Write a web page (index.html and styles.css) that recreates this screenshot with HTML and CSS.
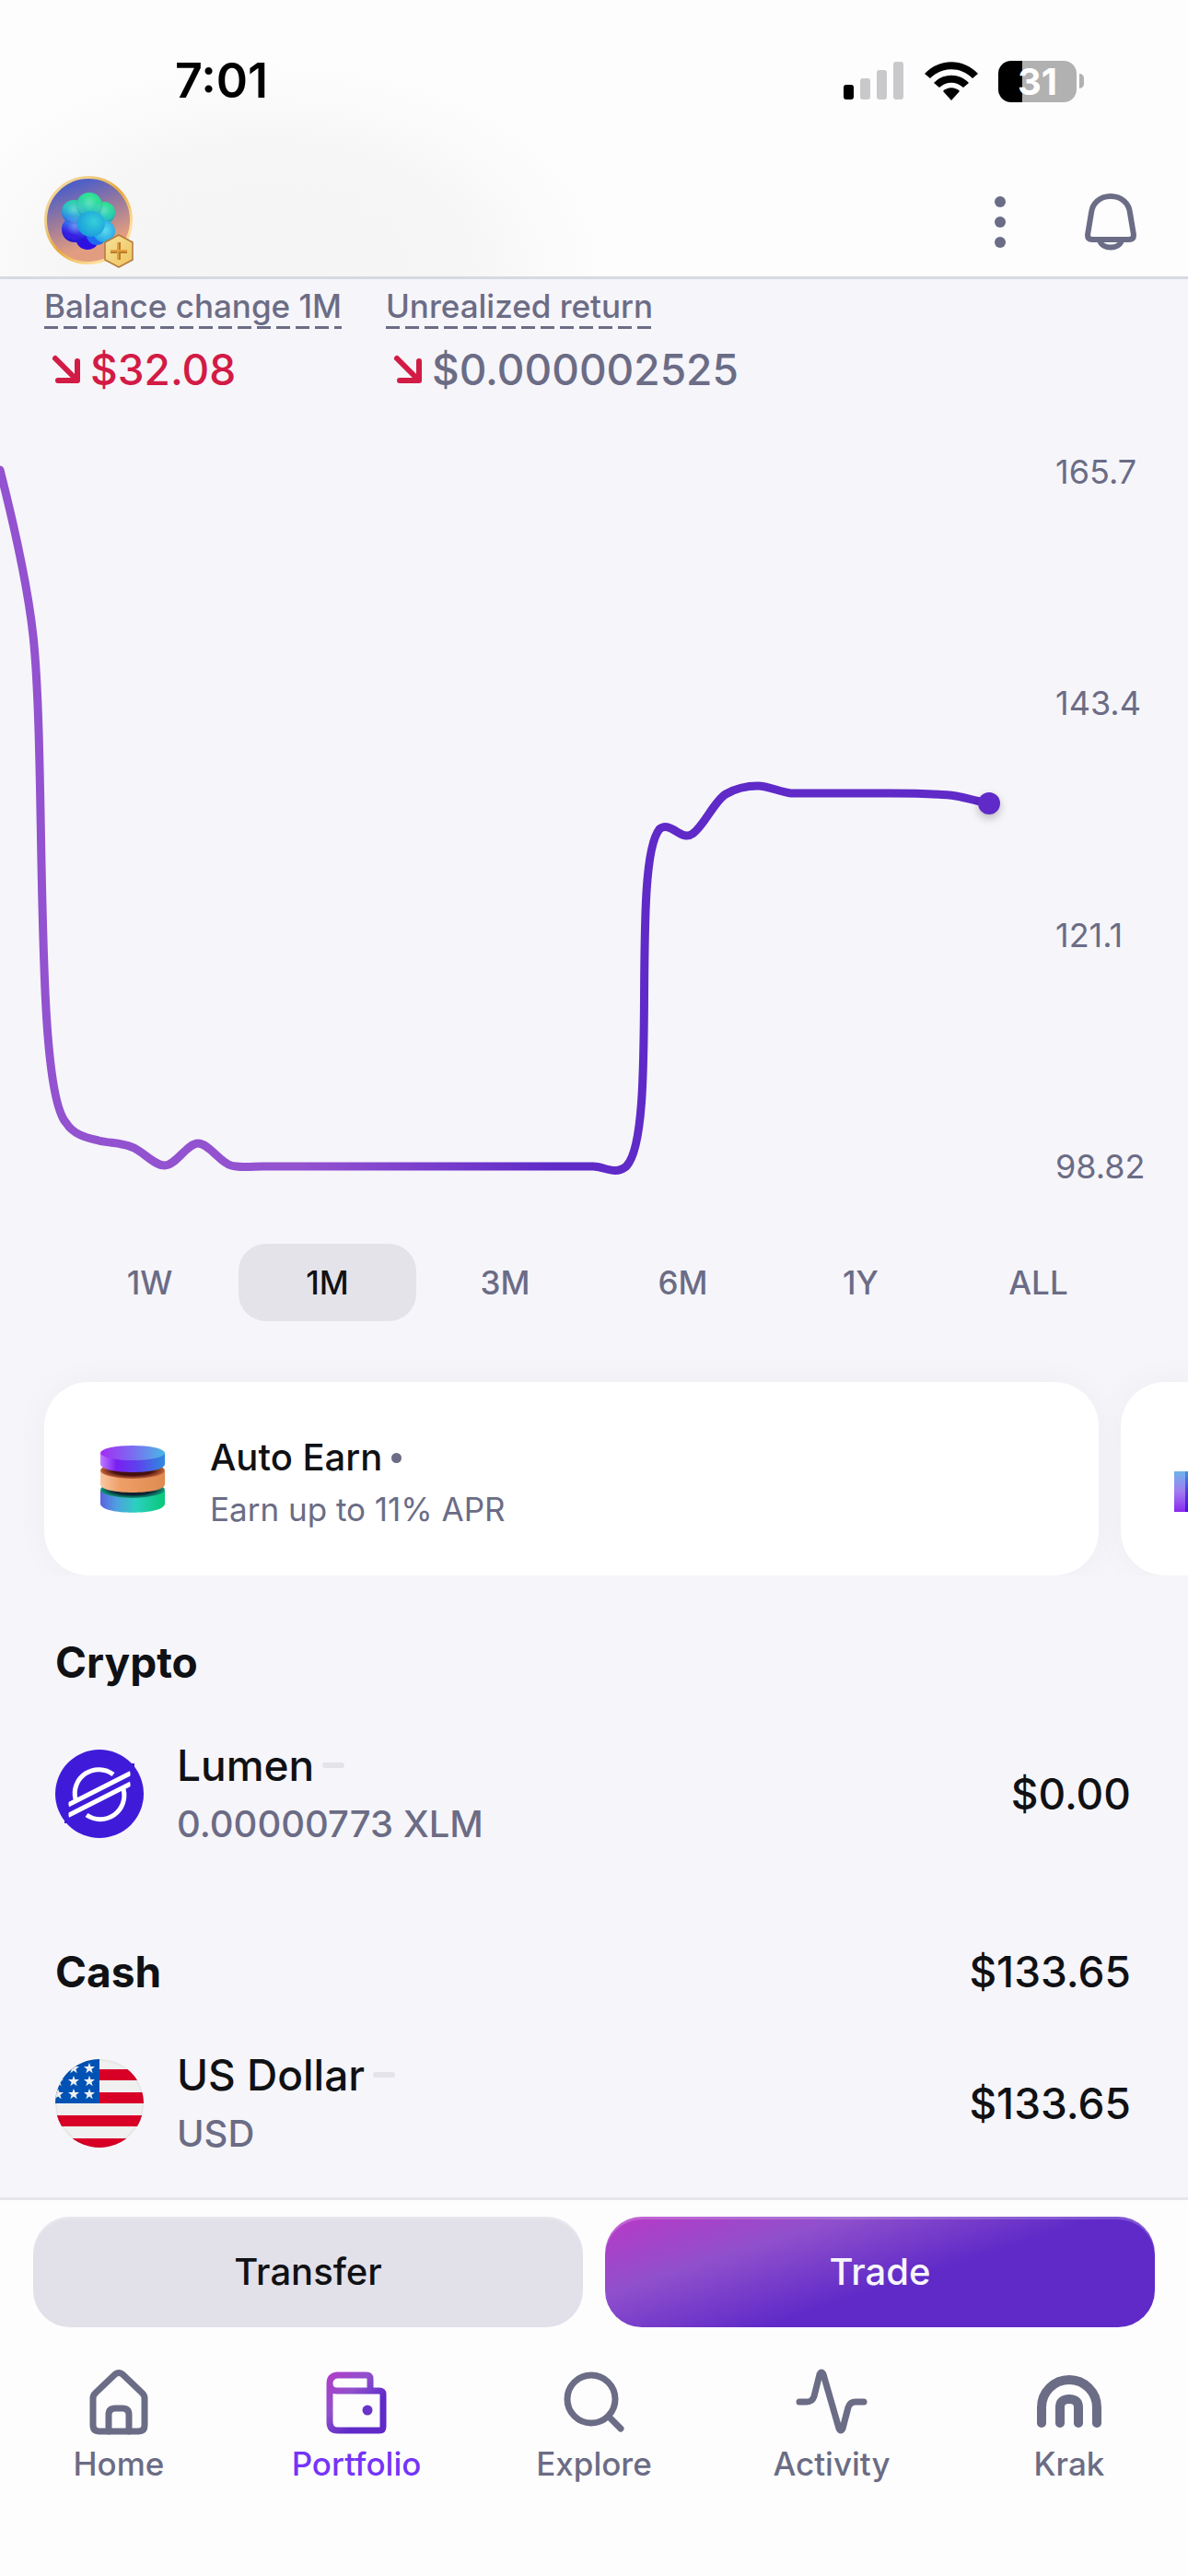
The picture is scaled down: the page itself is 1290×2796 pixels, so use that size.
FILE: index.html
```html
<!DOCTYPE html>
<html lang="en">
<head>
<meta charset="utf-8">
<meta name="viewport" content="width=device-width, initial-scale=1">
<title>Portfolio</title>
<link rel="stylesheet" href="styles.css">
</head>
<body>
<div class="app">
  <header class="top">
    <div class="status">
      <time class="clock">7:01</time>
      <div class="status-icons">
        <svg class="signal" viewBox="0 0 66 42" aria-hidden="true">
          <rect x="0" y="25" width="11" height="16" rx="3" fill="#000"/>
          <rect x="18" y="18" width="11" height="23" rx="3" fill="#c9c9cb"/>
          <rect x="36" y="9" width="11" height="32" rx="3" fill="#c9c9cb"/>
          <rect x="54" y="0" width="11" height="41" rx="3" fill="#c9c9cb"/>
        </svg>
        <svg class="wifi" viewBox="0 0 58 42" aria-hidden="true">
          <path d="M0 13C16-4 42-4 58 13L52 18C39 5 19 5 6 18Z"/>
          <path d="M10 23C20 12 38 12 48 23L42 28C34 21 24 21 16 28Z"/>
          <path d="M20 32C25 27 33 27 38 32L29 42Z"/>
        </svg>
        <div class="battery"><span class="battery-body">31</span><span class="battery-tip"></span></div>
      </div>
    </div>
    <div class="toolbar">
      <button class="icon-button" aria-label="Profile">
        <svg class="avatar" viewBox="0 0 100 100" aria-hidden="true">
          <defs>
            <linearGradient id="sky" x1=".25" y1="0" x2=".6" y2="1"><stop offset=".1" stop-color="#4f5fc6"/><stop offset=".45" stop-color="#9d7b9b"/><stop offset=".8" stop-color="#e29d80"/></linearGradient>
            <linearGradient id="ring" x1="0" y1="0" x2="1" y2="1"><stop offset="0" stop-color="#f7dda0"/><stop offset=".25" stop-color="#f0cf88"/><stop offset=".5" stop-color="#e6a93a"/><stop offset=".8" stop-color="#ffe2a0"/><stop offset="1" stop-color="#eeb040"/></linearGradient>
            <linearGradient id="blob" gradientUnits="userSpaceOnUse" x1="58" y1="20" x2="38" y2="76"><stop offset=".1" stop-color="#1fdf8e"/><stop offset=".42" stop-color="#1fbfc4"/><stop offset=".62" stop-color="#2a7cf0"/><stop offset=".85" stop-color="#2c10e2"/></linearGradient>
            <radialGradient id="shine" cx=".5" cy=".4" r=".55"><stop offset="0" stop-color="#fff" stop-opacity=".3"/><stop offset=".6" stop-color="#fff" stop-opacity=".05"/><stop offset="1" stop-color="#003a90" stop-opacity=".18"/></radialGradient>
            <radialGradient id="cyan" cx=".55" cy=".45" r=".6"><stop offset="0" stop-color="#5cdcec"/><stop offset="1" stop-color="#1f9fe6"/></radialGradient>
            <radialGradient id="teal" cx=".6" cy=".4" r=".6"><stop offset="0" stop-color="#35cfd8"/><stop offset="1" stop-color="#1b9fdc"/></radialGradient>
            <linearGradient id="gold" x1="0" y1="0" x2="1" y2="1"><stop offset="0" stop-color="#f7e19a"/><stop offset="1" stop-color="#efc45e"/></linearGradient>
          </defs>
          <circle cx="48" cy="48" r="46.500" fill="url(#sky)" stroke="url(#ring)" stroke-width="3"/>
          <g fill="url(#blob)">
            <circle cx="47" cy="67" r="13"/><circle cx="32" cy="39" r="13"/><circle cx="65" cy="40" r="12"/><circle cx="48" cy="50" r="22"/><circle cx="33" cy="58" r="14"/><circle cx="49" cy="32" r="14"/>
          </g>
          <g fill="url(#shine)"><circle cx="32" cy="39" r="13"/><circle cx="65" cy="40" r="12"/><circle cx="33" cy="58" r="14"/><circle cx="49" cy="32" r="14"/></g>
          <circle cx="57" cy="64" r="11" fill="#1f6cf0"/>
          <circle cx="65" cy="60" r="12" fill="url(#cyan)"/>
          <ellipse cx="51" cy="52" rx="15" ry="14" fill="url(#teal)"/>
          <path d="M81 64L96 72V91L81 99L66 91V72Z" fill="url(#gold)" stroke="#b57a3c" stroke-width="1.500" stroke-linejoin="round"/>
          <path d="M81 72V91M72 82H90" stroke="#b97c2c" stroke-width="4"/>
          <path d="M80 72V91M72 81H90" stroke="#e3a23f" stroke-width="2"/>
        </svg>
      </button>
      <div class="toolbar-actions">
        <button class="icon-button" aria-label="More">
          <svg class="action-icon" viewBox="0 0 72 72" fill="currentColor" aria-hidden="true"><circle cx="36" cy="14" r="6"/><circle cx="36" cy="36" r="6"/><circle cx="36" cy="58" r="6"/></svg>
        </button>
        <button class="icon-button" aria-label="Notifications">
          <svg class="action-icon" viewBox="0 0 72 72" fill="none" stroke="currentColor" stroke-width="6" stroke-linejoin="round" aria-hidden="true"><path d="M36 8C24 8 16 16 15 26L11 50Q11 55 16 55H56Q61 55 61 50L57 26C56 16 48 8 36 8Z"/><path d="M24 56C27 66 45 66 48 56"/></svg>
        </button>
      </div>
    </div>
  </header>

  <main>
    <dl class="stats">
      <div class="stat">
        <dt>Balance change 1M</dt>
        <dd class="down"><svg class="arrow" viewBox="0 0 50 50" aria-hidden="true"><path d="M12 13L35 36M15 37H36V16"/></svg>$32.08</dd>
      </div>
      <div class="stat">
        <dt>Unrealized return</dt>
        <dd><svg class="arrow" viewBox="0 0 50 50" aria-hidden="true"><path d="M12 13L35 36M15 37H36V16"/></svg>$0.000002525</dd>
      </div>
    </dl>

    <section class="chart" aria-label="Balance over one month">
      <svg class="plot" viewBox="0 488 1146 802" role="img" aria-label="Balance line">
        <defs>
          <linearGradient id="line" gradientUnits="userSpaceOnUse" x1="330" y1="0" x2="600" y2="0"><stop offset="0" stop-color="#9352cf"/><stop offset="1" stop-color="#5f2ac8"/></linearGradient>
        </defs>
        <path d="M0 510C14 565 30 635 36 690C51 830 36 1180 72 1219C80 1232 95 1235 107 1238C119 1241 131 1240 143 1245C155 1249 167 1265 179 1265C191 1265 203 1241 215 1241C227 1241 239 1262 251 1265C262 1268 275 1266 286 1266H644C656 1266 668 1276 680 1266C716 1230 684 940 716 900C728 890 740 914 752 905C764 897 776 869 788 862C800 855 812 853 823 853C835 853 847 860 859 861H967C990 861 1015 861 1038 864C1050 866 1062 870 1074 872" fill="none" stroke="url(#line)" stroke-width="9" stroke-linecap="round"/>
        <circle class="plot-point" cx="1074" cy="872" r="12"/>
      </svg>
      <ol class="axis"><li>165.7</li><li>143.4</li><li>121.1</li><li>98.82</li></ol>
    </section>

    <div class="ranges">
      <button class="range">1W</button>
      <button class="range selected" aria-pressed="true">1M</button>
      <button class="range">3M</button>
      <button class="range">6M</button>
      <button class="range">1Y</button>
      <button class="range">ALL</button>
    </div>

    <div class="promos">
      <a class="promo" href="#earn">
        <svg class="promo-icon" viewBox="0 0 72 76" aria-hidden="true">
          <defs>
            <linearGradient id="top1"><stop offset="0" stop-color="#a52cf4"/><stop offset=".5" stop-color="#7a6cf0"/><stop offset="1" stop-color="#4ab8e4"/></linearGradient>
            <linearGradient id="side1"><stop offset="0" stop-color="#c07cff"/><stop offset=".25" stop-color="#7a1ff2"/><stop offset=".6" stop-color="#5a45ec"/><stop offset="1" stop-color="#2f8be0"/></linearGradient>
            <linearGradient id="side2"><stop offset="0" stop-color="#fbc8a4"/><stop offset=".3" stop-color="#ee9f68"/><stop offset="1" stop-color="#e08a50"/></linearGradient>
            <linearGradient id="side3"><stop offset="0" stop-color="#5b62e0"/><stop offset=".25" stop-color="#4f9fe0"/><stop offset=".55" stop-color="#2cd0c0"/><stop offset="1" stop-color="#08c878"/></linearGradient>
            <radialGradient id="shade2"><stop offset=".6" stop-color="#45100e"/><stop offset="1" stop-color="#c8663a"/></radialGradient>
            <radialGradient id="shade3"><stop offset=".6" stop-color="#0a2030"/><stop offset="1" stop-color="#0f9c7c"/></radialGradient>
          </defs>
          <path d="M1 51V65C1 78 71 78 71 65V51Z" fill="url(#side3)"/><ellipse cx="36" cy="50" rx="35" ry="9" fill="url(#shade3)"/>
          <path d="M1 30V44C1 56 71 56 71 44V30Z" fill="url(#side2)"/><ellipse cx="36" cy="29" rx="35" ry="9" fill="url(#shade2)"/>
          <path d="M1 10V22C1 34 71 34 71 22V10Z" fill="url(#side1)"/><ellipse cx="36" cy="10" rx="35" ry="8" fill="url(#top1)"/>
        </svg>
        <span class="promo-text"><span class="promo-title">Auto Earn<i class="bullet"></i></span><span class="promo-sub">Earn up to 11% APR</span></span>
      </a>
      <a class="promo" href="#next" aria-label="Next offer">
        <svg class="promo-icon" viewBox="0 0 72 76" aria-hidden="true">
          <defs>
            <linearGradient id="block" x1="0" y1="0" x2="0" y2="1"><stop offset="0" stop-color="#6cb4ea"/><stop offset=".5" stop-color="#a27cf0"/><stop offset="1" stop-color="#8a28f0"/></linearGradient>
            <linearGradient id="block-side" x1="0" y1="0" x2="0" y2="1"><stop offset="0" stop-color="#4a8fe0"/><stop offset=".5" stop-color="#4a3ce8"/><stop offset="1" stop-color="#4a0ce0"/></linearGradient>
          </defs>
          <path d="M-2 30H10V74H-2Z" fill="url(#block)"/><path d="M10 30H70V74H10Z" fill="url(#block-side)"/>
        </svg>
      </a>
    </div>

    <section class="holdings">
      <div class="group-head"><h2>Crypto</h2></div>
      <a class="asset" href="#xlm">
        <svg class="coin" viewBox="0 0 96 96" aria-hidden="true">
          <circle cx="48" cy="48" r="48" fill="#3f1bd9"/>
          <g fill="none" stroke="#fff" stroke-width="5">
            <path d="M63 27A26 26 0 0 0 22 54"/><path d="M34 71A26 26 0 0 0 74 43"/>
            <path d="M14 60L82 25.500M14 71.500L82 37"/>
          </g>
          <path d="M10 50H14.500V80H10ZM81.500 15H86V45H81.500Z" fill="#3f1bd9"/>
        </svg>
        <span class="asset-name"><span class="asset-title">Lumen<i class="flat"></i></span><span class="asset-sub">0.00000773 XLM</span></span>
        <span class="amount">$0.00</span>
      </a>
      <div class="group-head"><h2>Cash</h2><span class="amount">$133.65</span></div>
      <a class="asset" href="#usd">
        <svg class="coin" viewBox="0 0 96 96" aria-hidden="true">
          <defs>
            <clipPath id="round"><circle cx="48" cy="48" r="48"/></clipPath>
            <path id="star" d="M0-6L1.500-2H6L2.400.900L3.700 5.200L0 2.600L-3.700 5.200L-2.400.900L-6-2H-1.500Z" fill="#f0f0f0"/>
          </defs>
          <g clip-path="url(#round)">
            <path d="M0 0H96V96H0Z" fill="#f0f0f0"/>
            <path d="M48 11H96V23H48ZM48 36H96V48H48ZM0 61H96V73H0ZM0 86H96V96H0Z" fill="#d80027"/>
            <path d="M0 0H48V48H0Z" fill="#0052b4"/>
            <use href="#star" x="20" y="10"/><use href="#star" x="37" y="10"/>
            <use href="#star" x="3" y="24"/><use href="#star" x="20" y="24"/><use href="#star" x="37" y="24"/>
            <use href="#star" x="3" y="38"/><use href="#star" x="20" y="38"/><use href="#star" x="37" y="38"/>
          </g>
          <circle cx="48" cy="48" r="47" fill="none" stroke="#000" stroke-opacity=".04" stroke-width="2"/>
        </svg>
        <span class="asset-name"><span class="asset-title">US Dollar<i class="flat"></i></span><span class="asset-sub">USD</span></span>
        <span class="amount">$133.65</span>
      </a>
    </section>
  </main>

  <footer class="dock">
    <div class="cta-row">
      <button class="cta transfer">Transfer</button>
      <button class="cta trade">Trade</button>
    </div>
    <nav class="tabs">
      <a class="tab" href="#home">
        <svg class="tab-icon" viewBox="0 0 80 80" aria-hidden="true"><path d="M12 36Q12 33 15 30L36 10Q40 7 44 10L65 30Q68 33 68 36V65Q68 72 61 72H19Q12 72 12 65Z"/><path d="M29 72V54Q29 47 36 47H44Q51 47 51 54V72"/></svg>
        Home</a>
      <a class="tab current" href="#portfolio" aria-current="page">
        <svg class="tab-icon" viewBox="0 0 80 80" aria-hidden="true">
          <defs><linearGradient id="wallet" gradientUnits="userSpaceOnUse" x1="10" y1="8" x2="66" y2="66"><stop offset="0" stop-color="#b13dc8"/><stop offset=".4" stop-color="#9050cc"/><stop offset=".75" stop-color="#5f2ac8"/></linearGradient></defs>
          <g class="wallet"><path d="M11 22V62Q11 71 20 71H65Q69 71 69 67V32Q69 28 65 28H19Q11 28 11 20T19 11H51Q55 11 55 15V28"/></g><circle cx="52" cy="49" r="5.500" fill="#6a35c9"/></svg>
        Portfolio</a>
      <a class="tab" href="#explore">
        <svg class="tab-icon" viewBox="0 0 80 80" aria-hidden="true"><circle cx="37" cy="37" r="26"/><path d="M56 56L69 69"/></svg>
        Explore</a>
      <a class="tab" href="#activity">
        <svg class="tab-icon" viewBox="0 0 80 80" aria-hidden="true"><path d="M5 40H13Q19 40 21 34L27 10Q29 6 31 10L48 69Q50 73 52 69L58 46Q60 40 66 40H75"/></svg>
        Activity</a>
      <a class="tab" href="#krak">
        <svg class="tab-icon krak" viewBox="0 0 80 80" aria-hidden="true"><path d="M10 63V46A30 30 0 0 1 70 46V63"/><path d="M30 63V46Q30 37 40 37T50 46V63"/></svg>
        Krak</a>
    </nav>
  </footer>
</div>
</body>
</html>
```
FILE: styles.css
```css
* { box-sizing: border-box; }
html, body { height: 100%; }
body {
  margin: 0;
  background: #f6f5fa;
  color: #101114;
  font-family: Inter, "Liberation Sans", sans-serif;
  font-size: 35px;
  line-height: 48px;
  font-weight: 500;
}
button { border: 0; padding: 0; background: none; color: inherit; font: inherit; cursor: pointer; }
a { color: inherit; text-decoration: none; }
svg { display: block; flex: none; }
h2, dl, dd, ol { margin: 0; padding: 0; }

.app { display: flex; flex-direction: column; min-height: 100%; overflow: hidden; }
main { flex: 1; }

/* Header */
.top {
  background: radial-gradient(ellipse 360px 220px at 290px 290px, #f5f5f6 0, #f6f6f7 60%, #fdfdfe 100%) #fdfdfe;
  border-bottom: 3px solid #d7d9e2;
}
.status { display: flex; justify-content: space-between; align-items: center; height: 174px; padding: 2px 113px 0 190px; }
.clock { font-size: 52px; font-weight: 600; color: #000; }
.status-icons { display: flex; align-items: center; gap: 22px; }
.signal { width: 66px; height: 42px; }
.wifi { width: 58px; height: 42px; }
.battery { display: flex; align-items: center; gap: 3px; }
.battery-body {
  width: 85px; height: 45px; border-radius: 14px;
  background: linear-gradient(90deg, #000 26px, #b1b1b1 26px);
  color: #fff; font-size: 40px; line-height: 45px; font-weight: 700; text-align: center;
}
.battery-tip { width: 5px; height: 16px; border-radius: 0 6px 6px 0; background: #b1b1b1; }
.toolbar { display: flex; justify-content: space-between; align-items: center; height: 126px; padding: 8px 48px 0; }
.toolbar-actions { display: flex; align-items: center; gap: 48px; color: #6b6c85; }
.avatar { width: 100px; height: 100px; }
.action-icon { width: 72px; height: 72px; }

/* Figures above the chart */
.stats { display: flex; gap: 48px; padding: 4px 48px 0; color: #6b6c85; }
.stat { display: flex; flex-direction: column; align-items: flex-start; gap: 14px; }
.stat dt {
  height: 50px; line-height: 50px;
  background: repeating-linear-gradient(90deg, #6b6c85 0 15px, transparent 15px 21px) left bottom / 100% 3px no-repeat;
}
.stat dd { display: flex; align-items: center; font-size: 46px; line-height: 60px; }
.stat .down { color: #d21b45; }
.arrow { width: 50px; height: 50px; fill: none; stroke: #d21b45; stroke-width: 6; stroke-linecap: round; stroke-linejoin: round; }

/* Chart */
.chart { display: flex; margin-top: 57px; }
.plot { flex: 1; min-width: 0; }
.plot-point { fill: #5f2ac8; filter: drop-shadow(0 4px 5px rgba(0, 0, 0, .25)); }
.axis {
  display: flex; flex-direction: column; justify-content: space-between;
  width: 144px; list-style: none; color: #6b6c85; font-size: 36px; font-weight: 400;
}
.ranges { display: grid; grid-template-columns: repeat(6, 1fr); padding: 0 66px; margin-top: 60px; color: #6b6c85; }
.range { height: 84px; border-radius: 30px; }
.range.selected { background: #e4e3e9; color: #101114; }

/* Offers */
.promos { display: flex; gap: 24px; padding: 66px 0 0 48px; overflow: hidden; }
.promo {
  display: flex; align-items: center; gap: 48px; flex: 0 0 calc(100% - 97px);
  height: 210px; padding: 0 60px; border-radius: 48px; background: #fff;
  box-shadow: 0 0 36px rgba(16, 17, 20, .04);
}
.promo-icon { width: 72px; height: 76px; overflow: visible; }
.promo-text { display: flex; flex-direction: column; gap: 6px; padding-top: 8px; }
.promo-title { display: flex; align-items: center; gap: 10px; font-size: 40px; line-height: 52px; }
.bullet { width: 11px; height: 11px; border-radius: 50%; background: #6b6c85; }
.promo-sub { color: #6b6c85; font-weight: 400; }

/* Holdings */
.holdings { padding: 64px 62px 41px 60px; font-size: 46px; line-height: 60px; }
.group-head { display: flex; justify-content: space-between; }
h2 { font-size: 46px; line-height: 60px; font-weight: 700; }
.asset { display: flex; align-items: center; gap: 36px; margin: 52px 0 102px; }
.asset:last-child { margin-bottom: 0; }
.coin { width: 96px; height: 96px; }
.asset-name { flex: 1; display: flex; flex-direction: column; gap: 6px; }
.asset-title { display: flex; align-items: center; gap: 9px; }
.flat { width: 24px; height: 6px; border-radius: 3px; background: #e4e3e9; }
.asset-sub { font-size: 40px; line-height: 56px; color: #6b6c85; }

/* Bottom actions and tabs */
.dock { border-top: 3px solid #e6e6eb; background: #fdfdfd; padding-bottom: 98px; }
.cta-row { display: grid; grid-template-columns: 1fr 1fr; gap: 24px; padding: 18px 36px 0; }
.cta { height: 120px; border-radius: 40px; font-size: 40px; box-shadow: inset 0 3px 0 rgba(255, 255, 255, .2); }
.transfer { background: #e2e0e9; }
.trade { background: linear-gradient(162deg, #b13dc8 5%, #9050cc 27%, #5f2ac8 56%); color: #f7f5fc; }
.tabs { display: grid; grid-template-columns: repeat(5, 1fr); padding-top: 41px; color: #6b6c85; }
.tab { display: flex; flex-direction: column; align-items: center; gap: 3px; }
.tab.current { color: #7434f8; }
.tab-icon { width: 80px; height: 80px; fill: none; stroke: currentColor; stroke-width: 7; stroke-linecap: round; stroke-linejoin: round; }
.wallet { stroke: url(#wallet); }
.tab-icon circle[fill] { stroke: none; }
.krak { stroke-width: 10; }
```
